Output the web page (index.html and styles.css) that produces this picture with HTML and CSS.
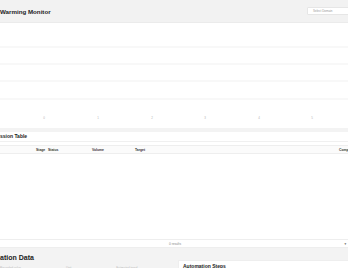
FILE: index.html
```html
<!DOCTYPE html>
<html lang="en">
<head>
    <meta charset="UTF-8">
    <meta name="viewport" content="width=device-width, initial-scale=1.0">
    <link rel="stylesheet" href="styles.css">
    <title>Global Warming Monitor</title>
</head>
<body>
    <div class="page">
        <header class="top-bar">
            <h1 class="title">Global Warming Monitor</h1>
            <div class="domain-select">Select Domain</div>
        </header>

        <div class="chart">
            <svg width="420" height="105" viewBox="0 0 420 105">
                <line x1="0" y1="24" x2="420" y2="24" stroke="#f1f1f1" stroke-width="1"/>
                <line x1="0" y1="41" x2="420" y2="41" stroke="#f1f1f1" stroke-width="1"/>
                <line x1="0" y1="58" x2="420" y2="58" stroke="#f1f1f1" stroke-width="1"/>
                <line x1="0" y1="76" x2="420" y2="76" stroke="#f1f1f1" stroke-width="1"/>
                <g font-family="Liberation Sans, Arial, sans-serif" font-size="3" fill="#b5b5b5" text-anchor="middle">
                    <text x="74" y="96">0</text>
                    <text x="128" y="96">1</text>
                    <text x="182" y="96">2</text>
                    <text x="235" y="96">3</text>
                    <text x="289" y="96">4</text>
                    <text x="342" y="96">5</text>
                </g>
            </svg>
        </div>

        <section class="panel">
            <h2 class="panel-title">Emission Table</h2>
            <div class="table">
                <div class="table-head">
                    <span class="col col-name"></span>
                    <span class="col col-stage">Stage</span>
                    <span class="col col-status">Status</span>
                    <span class="col col-volume">Volume</span>
                    <span class="col col-target">Target</span>
                    <span class="col col-comp">Completion</span>
                </div>
                <div class="table-body"></div>
                <div class="table-foot">
                    <span class="results">0 results</span>
                    <span class="foot-icon">&#9660;</span>
                </div>
            </div>
        </section>

        <section class="data">
            <div class="data-main">
                <h2 class="data-title">Simulation Data</h2>
                <div class="data-row">
                    <span>Recorded value</span>
                    <span>Unit</span>
                    <span>Estimated trend</span>
                </div>
            </div>
            <div class="steps-card">
                <h3 class="steps-title">Automation Steps</h3>
            </div>
        </section>
    </div>
</body>
</html>
```

FILE: styles.css
```css
html, body {
    margin: 0;
    overflow: hidden;
}

body {
    background-color: #f3f3f3;
    font-family: "Liberation Sans", Arial, sans-serif;
    color: #222;
}

.page {
    margin-left: -30px;
    width: 420px;
}

.top-bar {
    height: 23px;
    display: flex;
    align-items: center;
    justify-content: space-between;
    padding-left: 9px;
    background-color: #f2f2f2;
    box-sizing: border-box;
    border-bottom: 1px solid #ebebeb;
}

.title {
    margin: 0;
    font-size: 6.2px;
    font-weight: bold;
}

.domain-select {
    width: 83px;
    height: 8px;
    margin-bottom: 1px;
    padding-left: 5px;
    box-sizing: border-box;
    background-color: #fff;
    border: 0.5px solid #e6e6e6;
    border-radius: 1px;
    font-size: 3px;
    line-height: 7.5px;
    color: #999;
}

.chart {
    height: 105px;
    background-color: #fff;
    margin-bottom: 4px;
}

.chart svg {
    display: block;
}

.panel {
    background-color: #fff;
    height: 116px;
}

.panel-title {
    margin: 0;
    height: 9px;
    padding-left: 20.8px;
    font-size: 5px;
    font-weight: bold;
    line-height: 8px;
    border-bottom: 1px solid #f0f0f0;
}

.table {
    margin-top: 3px;
}

.table-head {
    display: flex;
    height: 9px;
    align-items: center;
    background-color: #fbfbfb;
    border-top: 1px solid #eeeeee;
    border-bottom: 1px solid #eeeeee;
    box-sizing: border-box;
    font-size: 3.4px;
    font-weight: bold;
    color: #333;
}

.col-name { width: 66px; }
.col-stage { width: 12px; }
.col-status { width: 44px; }
.col-volume { width: 43px; }
.col-target { width: 204px; }

.table-body {
    height: 85px;
}

.table-foot {
    display: flex;
    align-items: center;
    justify-content: space-between;
    height: 9px;
    box-sizing: border-box;
    border-top: 1px solid #eeeeee;
    border-bottom: 1px solid #eeeeee;
    padding-left: 199px;
    padding-right: 43px;
    font-size: 3.2px;
    color: #888;
}

.foot-icon {
    font-size: 3.2px;
    color: #666;
}

.data {
    display: flex;
    gap: 6px;
    padding-top: 5px;
}

.data-main {
    width: 202px;
}

.data-title {
    margin: 0;
    padding-left: 11px;
    font-size: 7px;
    font-weight: bold;
    line-height: 9px;
}

.data-row {
    display: flex;
    gap: 45px;
    margin-top: 4px;
    padding-left: 30px;
    font-size: 3px;
    color: #bbb;
}

.steps-card {
    flex: 1;
    margin-top: 7px;
    height: 40px;
    background-color: #fff;
    border: 1px solid #eeeeee;
    padding: 2px 4px;
}

.steps-title {
    margin: 0;
    font-size: 5px;
    font-weight: bold;
}
```
